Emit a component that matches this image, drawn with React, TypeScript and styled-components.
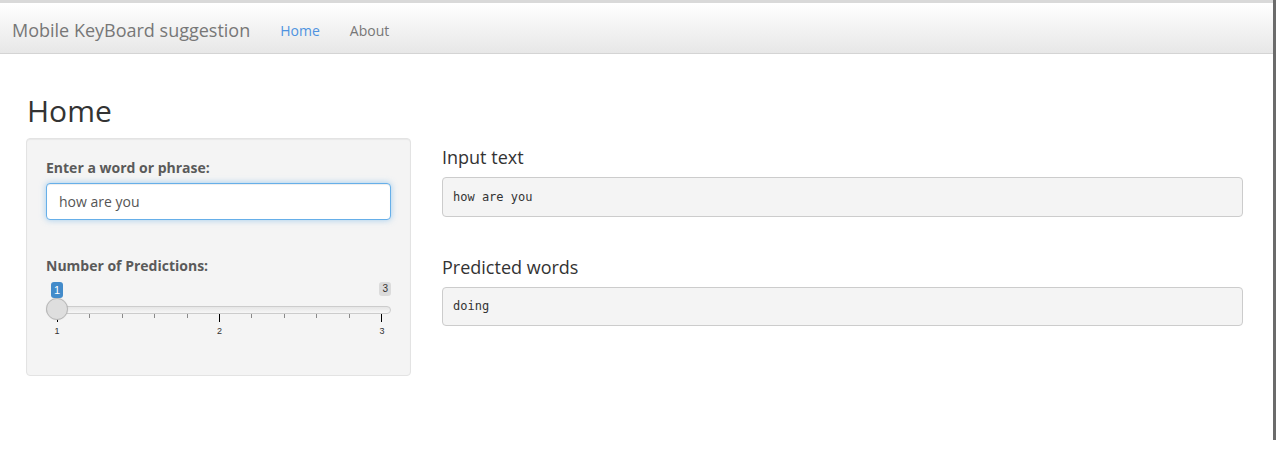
import React from "react";
import styled, { createGlobalStyle } from "styled-components";

const GlobalStyle = createGlobalStyle`
  html, body { margin: 0; padding: 0; background: #ffffff; }
  body {
    font-family: "Open Sans", "Liberation Sans", sans-serif;
    font-size: 14px;
    line-height: 1.42857;
    color: #333333;
  }
  * { box-sizing: border-box; }
`;

const Frame = styled.div`
  width: 1276px;
  height: 440px;
  border-right: 3px solid #6b6b6b;
  overflow: hidden;
  background: #ffffff;
`;

const Navbar = styled.nav`
  display: flex;
  align-items: stretch;
  height: 54px;
  border-top: 3px solid #d9d9d9;
  border-bottom: 1px solid #d4d4d4;
  background: linear-gradient(to bottom, #ffffff 0%, #e7e7e7 100%);
  padding-left: 12px;
`;

const Brand = styled.a`
  font-size: 18px;
  line-height: 20px;
  padding: 17px 15px 13px 0;
  color: #777777;
  text-decoration: none;
`;

const NavLink = styled.a<{ $active?: boolean }>`
  font-size: 14px;
  line-height: 20px;
  padding: 18px 15px 12px;
  color: ${(p) => (p.$active ? "#4f93e0" : "#777777")};
  text-decoration: none;
`;

const Page = styled.div`
  padding: 0 30px 0 26px;
`;

const Title = styled.h2`
  margin: 40px 0 10px 1px;
  font-size: 30px;
  line-height: 33px;
  font-weight: 400;
  color: #333333;
`;

const Row = styled.div`
  display: flex;
  align-items: flex-start;
  gap: 31px;
`;

const Well = styled.div`
  width: 385px;
  flex: none;
  margin-top: 1px;
  padding: 19px;
  background: #f4f4f4;
  border: 1px solid #e3e3e3;
  border-radius: 4px;
  box-shadow: inset 0 1px 1px rgba(0, 0, 0, 0.05);
`;

const Label = styled.label<{ $gap?: number }>`
  display: block;
  margin-top: ${(p) => p.$gap ?? 0}px;
  margin-bottom: 5px;
  font-weight: 700;
  font-size: 14px;
  line-height: 20px;
  color: #5a5a5a;
`;

const TextInput = styled.input`
  display: block;
  width: 100%;
  height: 37px;
  padding: 6px 12px;
  font-family: "Open Sans", "Liberation Sans", sans-serif;
  font-size: 14px;
  color: #555555;
  background: #ffffff;
  border: 1px solid #66afe9;
  border-radius: 4px;
  outline: 0;
  box-shadow: inset 0 1px 1px rgba(0, 0, 0, 0.075), 0 0 6px rgba(102, 175, 233, 0.6);
`;

const SliderWrap = styled.div`
  position: relative;
  height: 60px;
  margin-bottom: 15px;
`;

const BadgeRow = styled.div`
  display: flex;
  justify-content: space-between;
  align-items: flex-start;
  padding: 1px 0 0 5px;
  height: 15px;
`;

const Badge = styled.span<{ $kind: "from" | "max" }>`
  font-family: "Liberation Sans", Arial, sans-serif;
  font-size: ${(p) => (p.$kind === "from" ? 11 : 10)}px;
  line-height: ${(p) => (p.$kind === "from" ? 14 : 12)}px;
  padding: 1px 3px;
  border-radius: 3px;
  color: ${(p) => (p.$kind === "from" ? "#ffffff" : "#333333")};
  background: ${(p) => (p.$kind === "from" ? "#428bca" : "rgba(0,0,0,0.1)")};
  position: relative;
  z-index: 1;
`;

const Track = styled.div`
  margin-top: 10px;
  height: 8px;
  border: 1px solid #cccccc;
  border-radius: 8px;
  background: linear-gradient(to bottom, #dddddd -50%, #ffffff 150%);
`;

const Handle = styled.span`
  position: absolute;
  left: 0;
  top: 17px;
  width: 22px;
  height: 22px;
  border-radius: 50%;
  background: #dedede;
  border: 1px solid #b8b8b8;
  box-shadow: 0 0 1px rgba(0, 0, 0, 0.15);
`;

const Ticks = styled.div`
  display: flex;
  justify-content: space-between;
  align-items: flex-start;
  margin-left: 11px;
  width: 325px;
  height: 10px;
`;

const Tick = styled.span<{ $major?: boolean }>`
  width: 1px;
  height: ${(p) => (p.$major ? 8 : 4)}px;
  background: ${(p) => (p.$major ? "#000000" : "#8a8a8a")};
`;

const TickLabels = styled.div`
  display: flex;
  justify-content: space-between;
  margin-left: 1px;
  width: 345px;
  margin-top: 2px;
`;

const TickLabel = styled.span`
  width: 20px;
  text-align: center;
  font-family: "Liberation Sans", Arial, sans-serif;
  font-size: 9px;
  line-height: 10px;
  color: #333333;
`;

const Main = styled.div`
  flex: 1;
  min-width: 0;
`;

const SubTitle = styled.h4<{ $gap: number }>`
  margin: ${(p) => p.$gap}px 0 10px;
  font-size: 18px;
  line-height: 20px;
  font-weight: 400;
  color: #333333;
`;

const Output = styled.pre`
  margin: 0 0 10px;
  padding: 9.5px 10px;
  font-family: "DejaVu Sans Mono", "Liberation Mono", monospace;
  font-size: 12px;
  line-height: 18.5px;
  color: #333333;
  background: #f4f4f4;
  border: 1px solid #cccccc;
  border-radius: 4px;
`;

const tickCount = 11;

export default function App() {
  return (
    <>
      <GlobalStyle />
      <Frame>
        <Navbar>
          <Brand>Mobile KeyBoard suggestion</Brand>
          <NavLink $active>Home</NavLink>
          <NavLink>About</NavLink>
        </Navbar>
        <Page>
          <Title>Home</Title>
          <Row>
            <Well>
              <Label>Enter a word or phrase:</Label>
              <TextInput defaultValue="how are you" />
              <Label $gap={36}>Number of Predictions:</Label>
              <SliderWrap>
                <BadgeRow>
                  <Badge $kind="from">1</Badge>
                  <Badge $kind="max">3</Badge>
                </BadgeRow>
                <Track />
                <Ticks>
                  {Array.from({ length: tickCount }, (_, i) => (
                    <Tick key={i} $major={i % 5 === 0} />
                  ))}
                </Ticks>
                <TickLabels>
                  <TickLabel>1</TickLabel>
                  <TickLabel>2</TickLabel>
                  <TickLabel>3</TickLabel>
                </TickLabels>
                <Handle />
              </SliderWrap>
            </Well>
            <Main>
              <SubTitle $gap={10}>Input text</SubTitle>
              <Output>how are you</Output>
              <SubTitle $gap={40}>Predicted words</SubTitle>
              <Output>doing</Output>
            </Main>
          </Row>
        </Page>
      </Frame>
    </>
  );
}
